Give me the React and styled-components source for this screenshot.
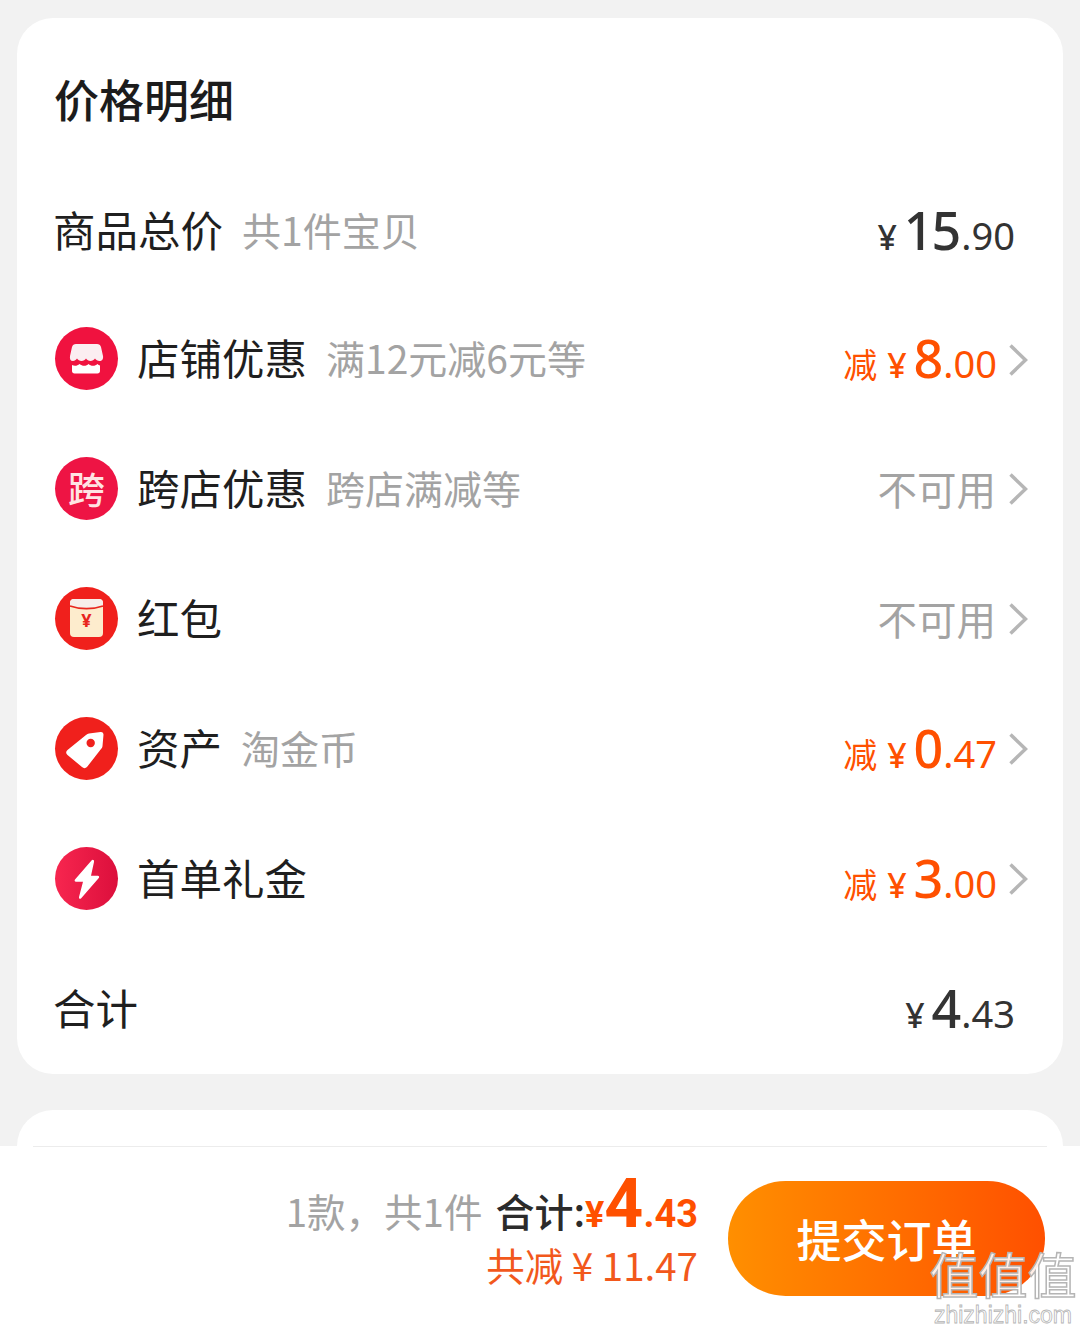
import React from 'react'
import styled, { createGlobalStyle } from 'styled-components'

const GlobalStyle = createGlobalStyle`
    html, body {
        margin: 0;
        padding: 0;
        background: #f2f2f2;
        font-family: "Noto Sans CJK SC", "Noto Sans", sans-serif;
    }
`
const Page = styled.div`
    position: relative;
    width: 1080px;
    height: 1332px;
    overflow: hidden;
    display: flex;
    flex-direction: column;
    background: #f2f2f2;
`
const Card = styled.section`
    margin: 18px 17px 0;
    height: 1056px;
    flex: none;
    box-sizing: border-box;
    padding: 0 35px 0 37px;
    background: #fff;
    border-radius: 36px;
`
const Title = styled.h2`
    margin: 0;
    height: 150px;
    padding-top: 10px;
    box-sizing: border-box;
    display: flex;
    align-items: center;
    font-size: 45px;
    font-weight: 500;
    color: #1c1c1c;
`
const Row = styled.div`
    height: ${(props) => props.h || 130}px;
    display: flex;
    align-items: center;
`
const Icon = styled.div`
    width: 63px;
    height: 63px;
    margin: 0 20px 4px 1px;
    flex: none;
    border-radius: 50%;
    background: ${(props) => props.bg};
    display: flex;
    align-items: center;
    justify-content: center;
    overflow: hidden;
    color: #ffe3e3;
    font-size: 37px;
    font-weight: 500;
    line-height: 1;
`
const Label = styled.span`
    margin: 0 0 6px -1px;
    font-size: 42.5px;
    color: #1f1f1f;
    line-height: 1;
`
const Sub = styled.span`
    margin: 0 0 6px 19px;
    font-size: 39px;
    color: #a3a3a3;
    line-height: 1;
`
const Right = styled.div`
    margin-left: auto;
    display: flex;
    align-items: baseline;
    color: ${(props) => props.color || '#333'};
    margin-right: ${(props) => props.plain ? '13px' : '0'};
    font-family: "Noto Sans", "Noto Sans CJK SC", sans-serif;
`
const Minus = styled.span`
    font-family: "Noto Sans CJK SC", sans-serif;
    font-size: 34px;
    margin-right: 10px;
`
const Yen = styled.span`
    font-size: 34px;
    font-weight: 500;
    margin-right: 7px;
`
const Whole = styled.span`
    font-size: 52px;
    font-weight: 500;
    letter-spacing: -2px;
    line-height: 1;
`
const Cents = styled.span`
    font-size: 38px;
    margin-left: 2px;
`
const Muted = styled.span`
    font-family: "Noto Sans CJK SC", sans-serif;
    font-size: 39.5px;
    color: #a3a3a3;
    margin: 0 1px 6px 0;
`
const ArrowSvg = styled.svg`
    width: 20px;
    height: 34px;
    margin-left: 11px;
    margin-bottom: 2px;
    flex: none;
`
const NextCard = styled.div`
    margin: 36px 17px 0;
    height: 36px;
    flex: none;
    background: #fff;
    border-radius: 36px 36px 0 0;
`
const Bar = styled.footer`
    flex: 1;
    position: relative;
    background: #fff;
    display: flex;
    justify-content: flex-end;
    padding: 35px 35px 0 0;
    &::before {
        content: '';
        position: absolute;
        top: 0;
        left: 33px;
        right: 33px;
        height: 1px;
        background: #ececec;
    }
`
const Summary = styled.div`
    display: flex;
    flex-direction: column;
    align-items: flex-end;
    margin: -11px 30px 0 0;
`
const SummaryLine = styled.div`
    display: flex;
    align-items: baseline;
    height: 71px;
`
const Count = styled.span`
    font-size: 38.5px;
    color: #a3a3a3;
    margin-right: 13px;
`
const Total = styled.span`
    font-size: 39px;
    color: #2b2b2b;
    font-weight: 500;
`
const Amount = styled.span`
    font-family: "Roboto", "Noto Sans", sans-serif;
    font-size: ${(props) => props.size}px;
    font-weight: 700;
    line-height: 1;
    color: #ff5000;
`
const Saved = styled.div`
    font-size: 38.5px;
    color: #f2581c;
    line-height: 46px;
`
const Submit = styled.button`
    width: 317px;
    height: 115px;
    border: 0;
    padding: 0;
    border-radius: 58px;
    background: linear-gradient(90deg, #ff8f00, #ff5000);
    color: #fff;
    font-family: inherit;
    font-size: 45px;
    font-weight: 500;
`
const Watermark = styled.div`
    position: absolute;
    left: 928px;
    top: 1242px;
    width: 150px;
    text-align: center;
    pointer-events: none;
`
const MarkGlyphs = styled.div`
    font-size: 49px;
    line-height: 62px;
    color: rgba(255, 255, 255, 0.9);
    -webkit-text-stroke: 1.5px #b5b5b5;
`
const MarkSite = styled.div`
    font-family: "Liberation Sans", sans-serif;
    font-size: 23px;
    line-height: 22px;
    color: #fff;
    -webkit-text-stroke: 0.8px #b5b5b5;
`

const Arrow = () => (
    <ArrowSvg viewBox="0 0 20 34">
        <path d="M2.500 2.500L17.500 17L2.500 31.500" fill="none" stroke="#b6b6b6" strokeWidth="3.500" />
    </ArrowSvg>
)

const Price = ({ whole, cents, minus, color }) => (
    <Right color={color} plain={!minus}>
        {minus && <Minus>减</Minus>}
        <Yen>¥</Yen>
        <Whole>{whole}</Whole>
        <Cents>.{cents}</Cents>
    </Right>
)

const Shop = () => (
    <svg width="63" height="63" viewBox="0 0 63 63">
        <path d="M21 17h21c2 0 3.500 1 4 3l2 9c.5 3-1 5-3.500 5-2 0-3.500-1-4.500-2.500-1 1.500-2.700 2.500-4.500 2.500-2 0-3.500-1-4.500-2.500-1 1.500-2.500 2.500-4.500 2.500s-3.500-1-4.500-2.500C21 33 19.500 34 18 34c-2.500 0-3.500-2-3-5l2-9c.5-2 2-3 4-3z" fill="#fbeef1" />
        <path d="M17 38c1 .5 2 .8 3 .8 1.800 0 3.200-.7 4.500-1.800 1.500 1.200 3 1.800 4.500 1.800 2 0 3.500-.7 4.500-1.800 1.200 1.100 2.700 1.800 4.500 1.800s3.300-.7 4.500-1.800c.7.700 1.500 1.200 2.500 1.500V44c0 1.500-1 2.500-2.500 2.500h-23C18 46.500 17 45.500 17 44z" fill="#fff" />
    </svg>
)

const Envelope = () => (
    <svg width="63" height="63" viewBox="0 0 63 63">
        <rect x="15" y="12" width="33" height="38" rx="4" fill="#fdeccd" />
        <path d="M15 16c0-2.500 1.500-4 4-4h25c2.500 0 4 1.500 4 4v3c-10 3.500-23 3.500-33 0z" fill="#f7eeea" />
        <path d="M15 19c10 3.500 23 3.500 33 0" fill="none" stroke="#e8261e" strokeWidth="1.800" />
        <text x="31.500" y="40" textAnchor="middle" fontSize="18" fontWeight="700" fill="#e8261e" fontFamily="Noto Sans">¥</text>
    </svg>
)

const Tag = () => (
    <svg width="63" height="63" viewBox="0 0 63 63">
        <path d="M34 16.500l11.500-1.500c2-.2 3 1 3 2.800l-1 11.200c-.1 1.200-.5 2-1.300 2.800L32 50c-1.500 1.500-3.500 1.500-5 0L12.500 38c-1.800-1.500-1.800-3.500 0-5L31 18c1-.8 2-1.300 3-1.500z" fill="#fff" />
        <circle cx="35.700" cy="26" r="4.200" fill="#f0201c" />
    </svg>
)

const Bolt = () => (
    <svg width="63" height="63" viewBox="0 0 63 63">
        <path d="M36.500 13.500L20 32.500c-.8 1-.3 2.200 1 2.200h7l-4 15.300c-.3 1.800 1 2.400 2.200 1.200L43.800 31c.8-1 .3-2.200-1-2.200H36l3-13.800c.4-2-1.300-2.800-2.500-1.500z" fill="#fff" />
    </svg>
)

const App = () => {
    return (
        <Page>
            <GlobalStyle />
            <Card>
                <Title>价格明细</Title>
                <Row h={128}>
                    <Label>商品总价</Label>
                    <Sub>共1件宝贝</Sub>
                    <Price whole="15" cents="90" />
                </Row>
                <Row h={129}>
                    <Icon bg="#f0123f"><Shop /></Icon>
                    <Label>店铺优惠</Label>
                    <Sub>满12元减6元等</Sub>
                    <Price whole="8" cents="00" minus color="#ff5000" />
                    <Arrow />
                </Row>
                <Row>
                    <Icon bg="#ee1444">跨</Icon>
                    <Label>跨店优惠</Label>
                    <Sub>跨店满减等</Sub>
                    <Right><Muted>不可用</Muted></Right>
                    <Arrow />
                </Row>
                <Row>
                    <Icon bg="#f0201c"><Envelope /></Icon>
                    <Label>红包</Label>
                    <Right><Muted>不可用</Muted></Right>
                    <Arrow />
                </Row>
                <Row>
                    <Icon bg="#f0201c"><Tag /></Icon>
                    <Label>资产</Label>
                    <Sub>淘金币</Sub>
                    <Price whole="0" cents="47" minus color="#ff5000" />
                    <Arrow />
                </Row>
                <Row>
                    <Icon bg="linear-gradient(90deg, #f7264f, #dc0f3c)"><Bolt /></Icon>
                    <Label>首单礼金</Label>
                    <Price whole="3" cents="00" minus color="#ff5000" />
                    <Arrow />
                </Row>
                <Row>
                    <Label>合计</Label>
                    <Price whole="4" cents="43" />
                </Row>
            </Card>
            <NextCard />
            <Bar>
                <Summary>
                    <SummaryLine>
                        <Count>1款，共1件</Count>
                        <Total>合计:</Total>
                        <Amount size={36}>¥</Amount>
                        <Amount size={68}>4</Amount>
                        <Amount size={38}>.43</Amount>
                    </SummaryLine>
                    <Saved>共减 ¥ 11.47</Saved>
                </Summary>
                <Submit>提交订单</Submit>
            </Bar>
            <Watermark>
                <MarkGlyphs>值值值</MarkGlyphs>
                <MarkSite>zhizhizhi.com</MarkSite>
            </Watermark>
        </Page>
    )
}

export default App
